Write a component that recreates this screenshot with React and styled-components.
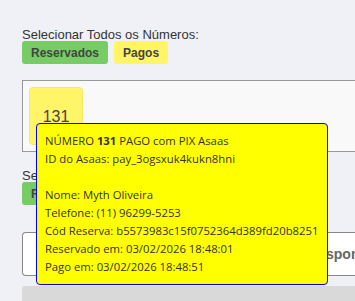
import React from "react";
import styled, { createGlobalStyle } from "styled-components";

const GlobalStyle = createGlobalStyle`
  body {
    margin: 0;
    background: #f0f1f6;
    font-family: "Liberation Sans", Arial, sans-serif;
    overflow: hidden;
  }
`;

const Page = styled.div`
  position: relative;
  padding: 27px 0 0 22px;
  width: 355px;
  height: 301px;
  box-sizing: border-box;
  overflow: hidden;
`;

const Label = styled.div`
  font-size: 13px;
  line-height: 15px;
  color: #333;
`;

const ButtonRow = styled.div`
  display: flex;
  gap: 6px;
  margin-top: -1px;
`;

const FilterButton = styled.button`
  border: none;
  border-radius: 3px;
  height: 23px;
  padding: 0 9px;
  font-family: "Liberation Sans", Arial, sans-serif;
  font-size: 12px;
  font-weight: bold;
  color: #444;
  background: ${(p) => (p.$paid ? "#fff566" : "#77cc66")};
`;

const NumberBox = styled.div`
  margin-top: 16px;
  height: 72px;
  box-sizing: border-box;
  border: 1px solid #999;
  border-right: none;
  background: #f9f9f9;
  padding: 6px 6px;
  display: flex;
  gap: 6px;
`;

const Cell = styled.div`
  width: 54px;
  height: 58px;
  box-sizing: border-box;
  border: 1px solid #f5e76a;
  border-radius: 4px;
  background: #fff566;
  display: flex;
  align-items: center;
  justify-content: center;
  padding-top: 2px;
  font-size: 16px;
  color: #444;
`;

const Section = styled.div`
  margin-top: 16px;
`;

const SelectBox = styled.div`
  margin-top: 27px;
  height: 44px;
  box-sizing: border-box;
  border: 1px solid #888;
  border-right: none;
  border-radius: 4px 0 0 4px;
  background: #fff;
  display: flex;
  align-items: center;
  padding-left: 289px;
  font-size: 14px;
  font-weight: bold;
  color: #666;
  white-space: nowrap;
  overflow: hidden;
`;

const GreyBar = styled.div`
  margin-top: 10px;
  height: 20px;
  background: #d9d9d9;
  border-radius: 3px 0 0 0;
`;

const Tooltip = styled.div`
  position: absolute;
  left: 36px;
  top: 123px;
  width: 292px;
  height: 162px;
  box-sizing: border-box;
  background: #ffff00;
  border: 1px solid #0000ff;
  border-radius: 4px;
  padding: 8px 8px;
  font-family: "Open Sans", "Noto Sans", sans-serif;
  font-size: 11.3px;
  line-height: 18px;
  color: #333;
  white-space: nowrap;
`;

const Line = styled.div`
  height: 18px;
`;

export default function App() {
  const info = [
    "Nome: Myth Oliveira",
    "Telefone: (11) 96299-5253",
    "Cód Reserva: b5573983c15f0752364d389fd20b8251",
    "Reservado em: 03/02/2026 18:48:01",
    "Pago em: 03/02/2026 18:48:51",
  ];
  return (
    <>
      <GlobalStyle />
      <Page>
        <Label>Selecionar Todos os Números:</Label>
        <ButtonRow>
          <FilterButton>Reservados</FilterButton>
          <FilterButton $paid>Pagos</FilterButton>
        </ButtonRow>
        <NumberBox>
          <Cell>131</Cell>
        </NumberBox>
        <Section>
          <Label>Selecionar Números:</Label>
          <ButtonRow>
            <FilterButton>Reservados</FilterButton>
          </ButtonRow>
        </Section>
        <SelectBox>Disponíveis</SelectBox>
        <GreyBar />
        <Tooltip>
          <Line>
            NÚMERO <b>131</b> PAGO com PIX Asaas
          </Line>
          <Line>ID do Asaas: pay_3ogsxuk4kukn8hni</Line>
          <Line />
          {info.map((t) => (
            <Line key={t}>{t}</Line>
          ))}
        </Tooltip>
      </Page>
    </>
  );
}
